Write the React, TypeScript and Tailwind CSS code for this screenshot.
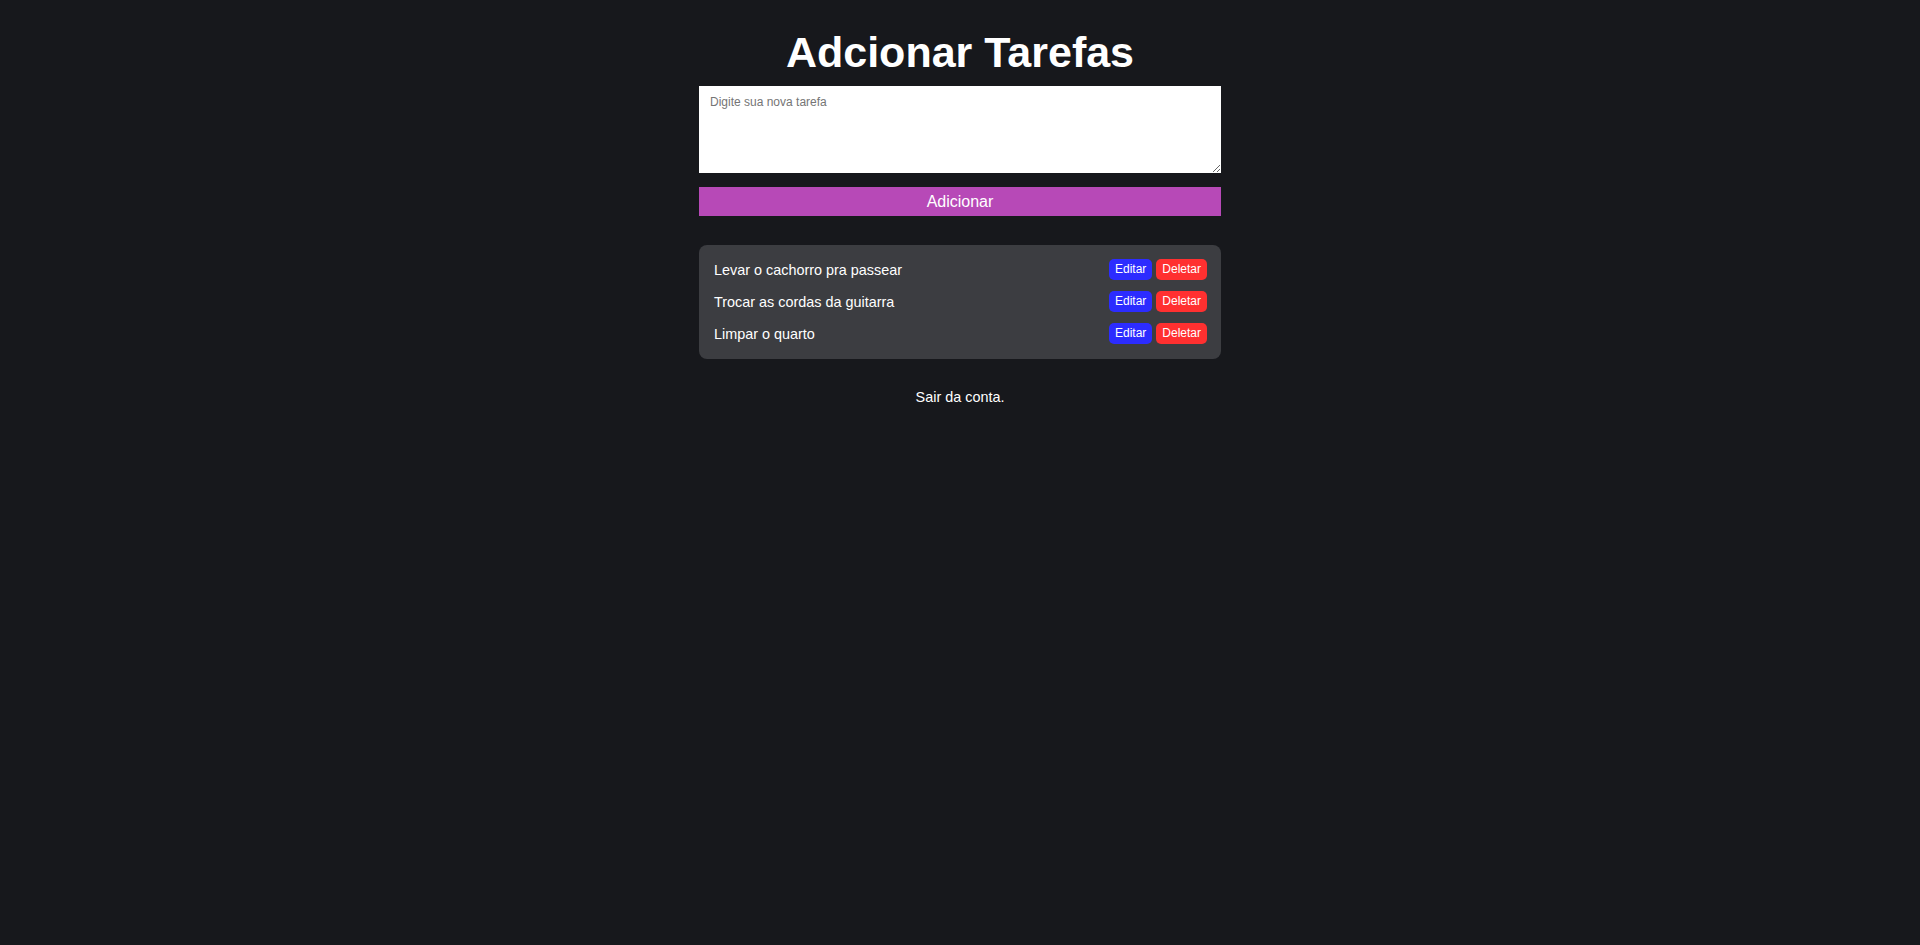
import React from "react";

const tasks = ["Levar o cachorro pra passear", "Trocar as cordas da guitarra", "Limpar o quarto"];

export default function App() {
  return (
    <div
      className="min-h-[945px] w-full bg-[#17181c] text-white flex flex-col items-center pt-[27px]"
      style={{ fontFamily: '"Liberation Sans", Arial, sans-serif' }}
    >
      <h1 className="text-[43px] font-bold leading-[50px] text-white">Adcionar Tarefas</h1>
      <div className="w-[522px] flex flex-col mt-[9px]">
        <textarea
          placeholder="Digite sua nova tarefa"
          className="w-full h-[87px] bg-white text-black text-[12px] px-[11px] py-[7px] border-0 outline-none placeholder:text-[#757575] block"
          style={{ fontFamily: '"Liberation Sans", Arial, sans-serif' }}
        />
        <button className="mt-[14px] h-[29px] w-full bg-[#b749b7] text-white text-[16px] leading-[29px]">
          Adicionar
        </button>
        <div className="mt-[29px] bg-[#3c3d41] rounded-lg pt-[14px] pb-[15px] pl-[15px] pr-[14px] flex flex-col gap-[11px]">
          {tasks.map((t) => (
            <div key={t} className="flex items-center justify-between h-[21px]">
              <span className="text-[14.4px] leading-[16px] text-white">{t}</span>
              <div className="flex gap-[4px]">
                <button className="h-[21px] px-[6px] rounded-[5px] bg-[#2c2cff] text-white text-[12px] leading-[21px]">
                  Editar
                </button>
                <button className="h-[21px] px-[6px] rounded-[5px] bg-[#ff3030] text-white text-[12px] leading-[21px]">
                  Deletar
                </button>
              </div>
            </div>
          ))}
        </div>
      </div>
      <p className="mt-[30px] text-[14.4px] leading-[16px] text-white">Sair da conta.</p>
    </div>
  );
}
